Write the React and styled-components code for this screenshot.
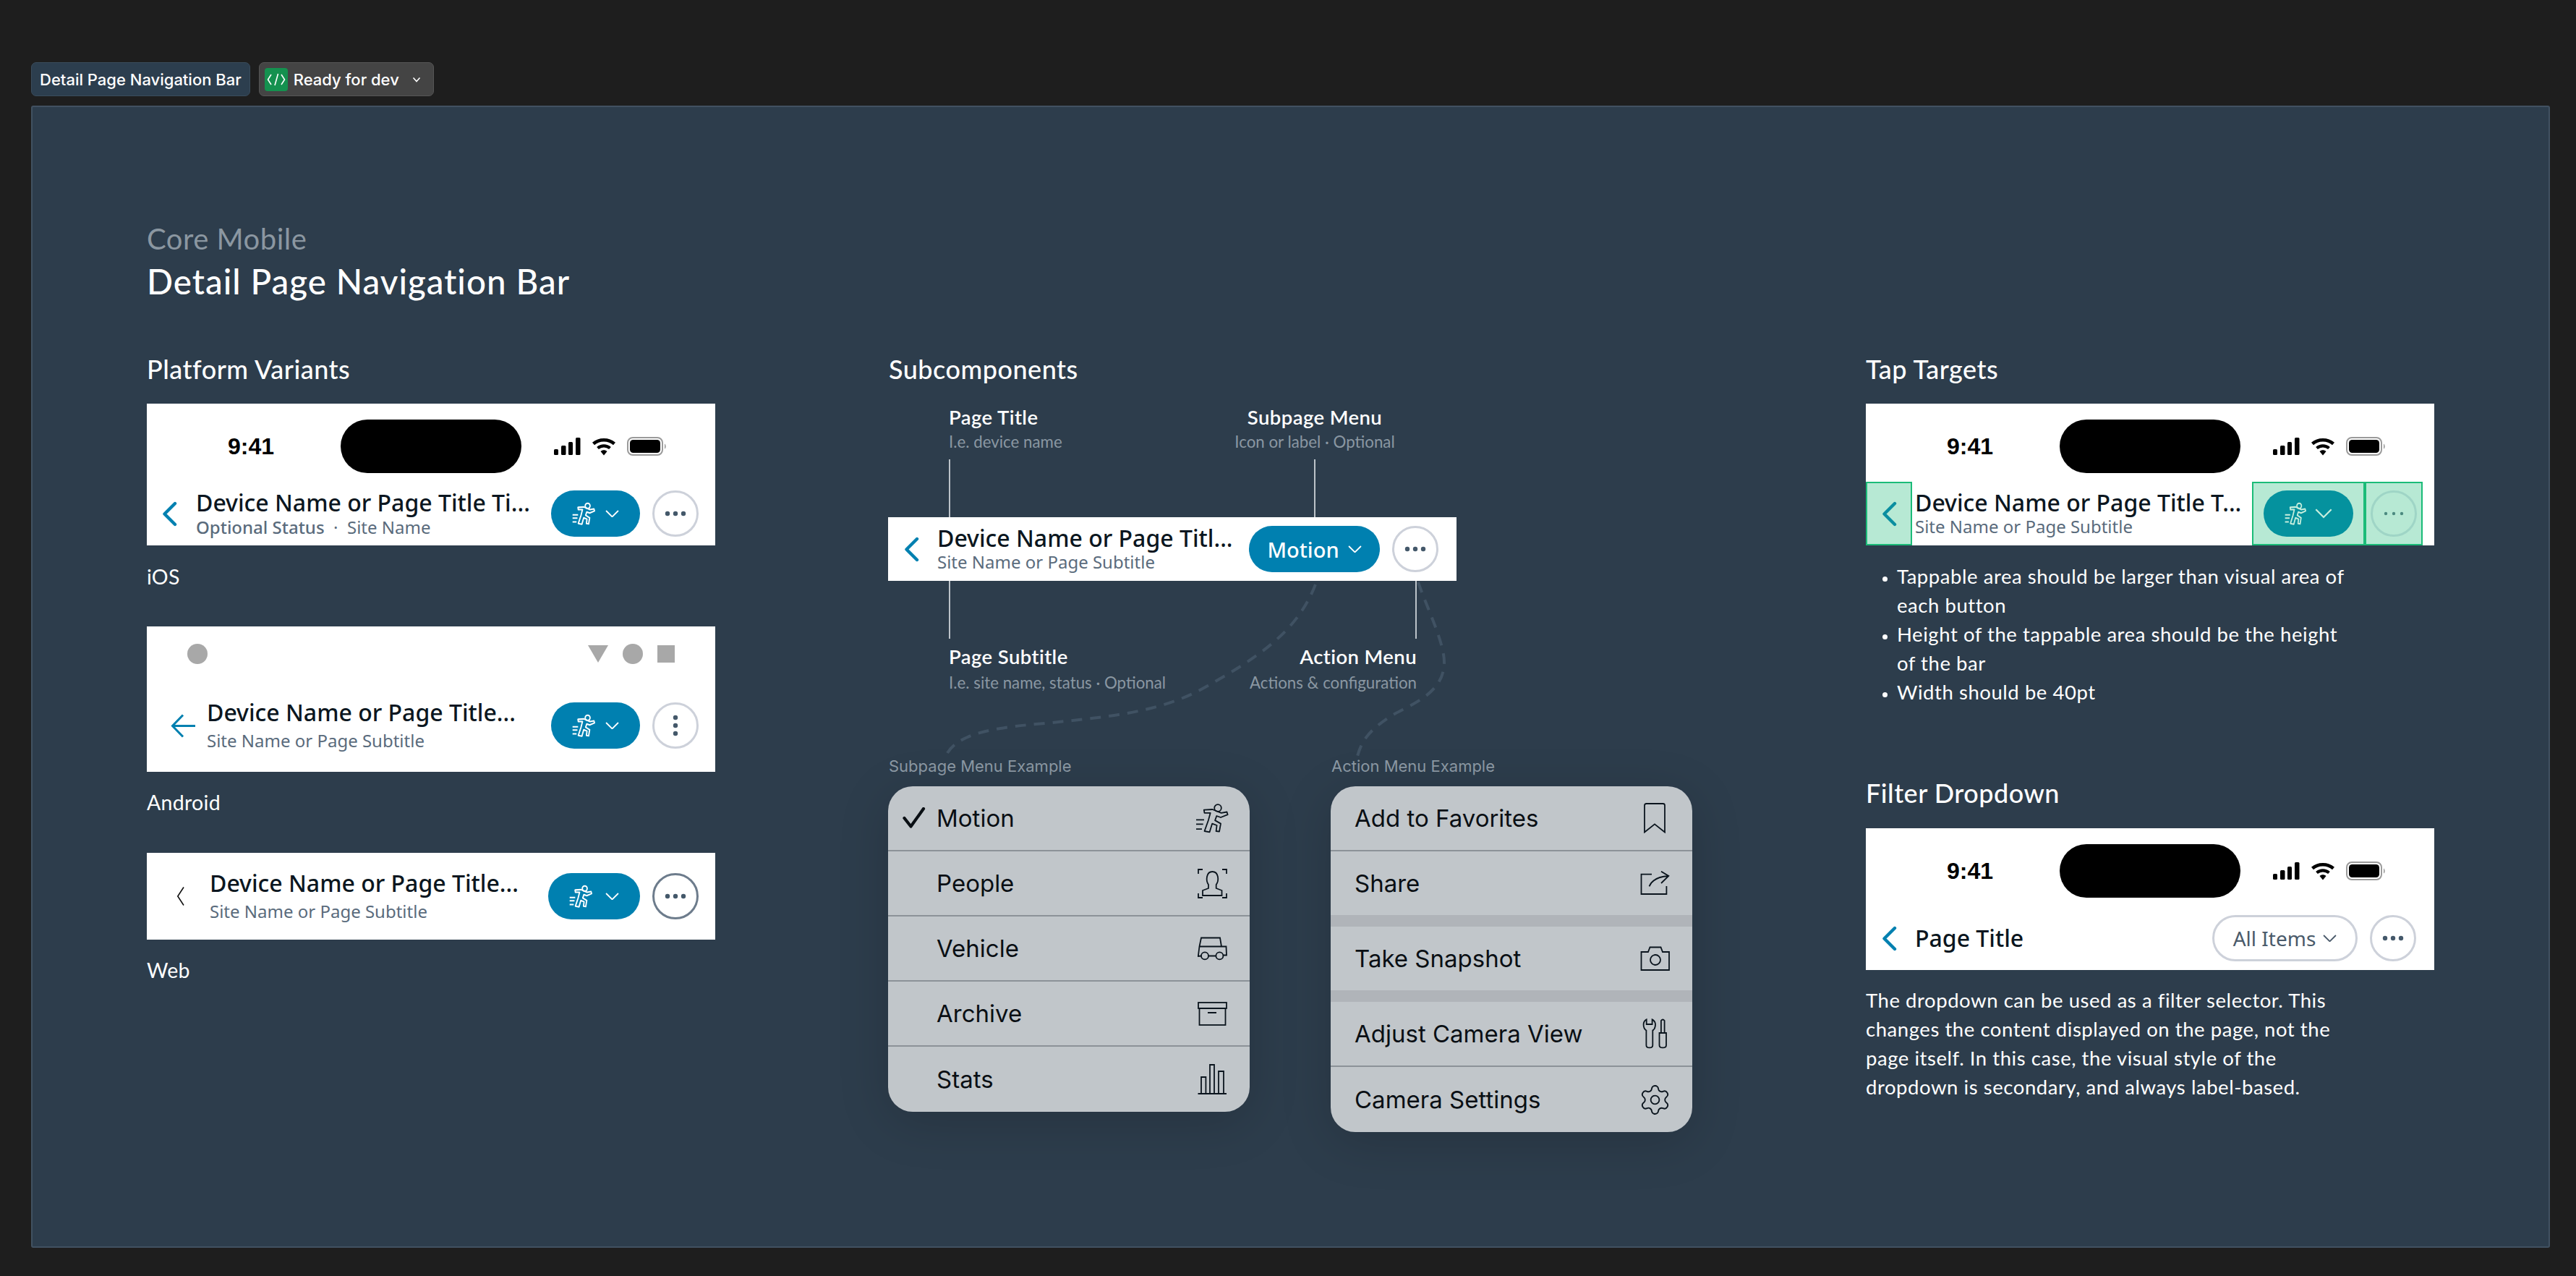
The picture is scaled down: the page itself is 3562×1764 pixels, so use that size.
import React from "react";
import styled, { createGlobalStyle } from "styled-components";
import { Settings } from "lucide-react";

const Global = createGlobalStyle`
  html, body { margin: 0; padding: 0; background: #1e1e1e; }
  * { box-sizing: border-box; }
`;
const HEAD = `Lato, "Open Sans", sans-serif`;
const BAR = `"Noto Sans", "Open Sans", sans-serif`;
const UI = `Inter, "Noto Sans", sans-serif`;

const Page = styled.div`
  width: 3562px; height: 1764px; background: #1e1e1e; padding: 86px 36px 0 43px; overflow: hidden;
`;
const Tabs = styled.div`display: flex; gap: 12px; height: 47px; margin-bottom: 13px;`;
const Tab = styled.div`
  display: flex; align-items: center; height: 47px; border-radius: 7px; font: 500 22px ${UI}; color: #fff;
  background: ${p => p.$bg}; border: 1.5px solid ${p => p.$line}; padding: ${p => p.$pad};
`;
const CodeBadge = styled.span`
  display: flex; width: 32px; height: 32px; border-radius: 4px; background: #14914f; margin-right: 8px;
`;
const TabCaret = styled.svg`width: 12px; height: 8px; margin-left: 18px;`;

const Frame = styled.div`
  width: 3483px; height: 1579px; background: #2d3d4c; border: 2px solid #415161; border-radius: 3px;
  padding: 160px 0 0 158px;
`;
const Eyebrow = styled.div`font: 400 40px/44px ${HEAD}; letter-spacing: .5px; color: #8b97a1;`;
const PageTitle = styled.h1`margin: 9px 0 0; font: 500 47.5px/56px ${HEAD}; letter-spacing: 1px; color: #fff;`;
const Columns = styled.div`display: grid; grid-template-columns: 1025px 1352px 786px; margin-top: 73px;`;
const Column = styled.div`position: relative; display: flex; flex-direction: column; align-items: flex-start;`;
const SectionTitle = styled.h2`
  margin: ${p => p.$top || 0}px 0 ${p => p.$bottom || 28}px; padding-left: ${p => p.$inset || 0}px;
  font: 500 36px/40px ${HEAD}; letter-spacing: .5px; color: #fff;
`;
const Caption = styled.div`font: 400 28.5px/32px ${HEAD}; letter-spacing: .3px; color: #fff; margin: ${p => p.$top}px 0 ${p => p.$bottom}px;`;

const Bar = styled.div`width: 786px; background: #fff; flex: none;`;

const StatusRow = styled.div`display: flex; align-items: center; height: 108px; padding: 22px 0 12px 112px;`;
const Time = styled.div`width: 64px; margin-right: 92px; font: 700 32px/1 "Liberation Sans", Arial, sans-serif; color: #000;`;
const Island = styled.div`width: 250px; height: 74px; border-radius: 37px; background: #000; margin-right: 45px;`;
const SysIcons = styled.div`display: flex; align-items: center; gap: 15px;`;

const AndroidRow = styled.div`display: flex; align-items: flex-start; height: 93px; padding: 24px 0 0 56px;`;
const DroidDot = styled.div`width: 28px; height: 28px; border-radius: 50%; background: #a8a8a8; margin-left: ${p => p.$left || 0}px;`;
const DroidTriangle = styled.svg`width: 28px; height: 24px; margin: 2px 0 0 526px;`;
const DroidSquare = styled.div`width: 24px; height: 24px; background: #a8a8a8; margin: 2px 0 0 20px;`;

const NavRow = styled.div`
  display: flex; align-items: center; height: ${p => p.$h || 88}px; padding-right: ${p => p.$right ?? 23}px;
  margin-bottom: ${p => p.$after || 0}px;
`;
const BackSlot = styled.div`display: flex; flex: none; align-items: center; width: ${p => p.$w}px; padding-left: ${p => p.$left}px;`;
const TitleBlock = styled.div`
  flex: 1; min-width: 0; display: flex; flex-direction: column; gap: ${p => p.$gap || 0}px; padding-left: ${p => p.$inset || 0}px;
`;
const DeviceTitle = styled.div`font: 500 32px/36px ${BAR}; color: #0b1620; white-space: nowrap;`;
const DeviceSub = styled.div`font: 400 24px/30px ${BAR}; color: #5a6b7c; white-space: nowrap;`;
const StatusText = styled.span`font-weight: 500;`;
const Actions = styled.div`display: flex; flex: none; gap: 17px; align-items: center;`;
const Pill = styled.div`
  display: flex; align-items: center; justify-content: center; flex: none; gap: ${p => p.$gap || 14}px;
  width: ${p => p.$w || 123}px; height: 64px; border-radius: 32px; background: ${p => p.$bg || "#0080b0"};
  color: ${p => p.$ink || "#fff"}; font: 500 29px/1 ${BAR};
`;
const OutlinePill = styled.div`
  display: flex; align-items: center; justify-content: center; gap: 10px; flex: none; width: 201px; height: 64px;
  border-radius: 32px; border: 3px solid #cdd1da; color: #4a5a6a; font: 400 28px/1 ${BAR};
`;
const More = styled.div`
  display: flex; align-items: center; justify-content: center; flex: none; width: 64px; height: 64px; border-radius: 50%;
  border: 3px solid ${p => p.$line || "#cdd1da"};
`;
const Zone = styled.div`
  display: flex; align-items: center; justify-content: center; flex: none; align-self: stretch; width: ${p => p.$w}px;
  background: #b7e9d4; border: 2px solid #1bbb78;
`;

const Overlay = styled.svg`position: absolute; left: 0; top: 0; width: 1000px; height: 600px; pointer-events: none;`;
const AnnoRow = styled.div`
  width: 786px; display: flex; justify-content: space-between; padding: ${p => p.$pad};
`;
const Anno = styled.div`
  display: flex; flex-direction: column; align-items: ${p => p.$align}; width: ${p => p.$w ? p.$w + "px" : "auto"};
`;
const AnnoName = styled.div`font: 600 27.5px/34px ${HEAD}; letter-spacing: .4px; color: #fff; white-space: nowrap;`;
const AnnoNote = styled.div`font: 400 22.3px/26px ${HEAD}; color: #8a97a2; margin-top: ${p => p.$top}px; white-space: nowrap;`;
const Stem = styled.div`width: 2px; height: ${p => p.$h}px; background: #bcc3c9; margin: ${p => p.$m};`;

const Menus = styled.div`display: flex; gap: 112px; margin-top: 89px;`;
const MenuCol = styled.div`display: flex; flex-direction: column; width: 500px;`;
const MenuLabel = styled.div`font: 400 22px/26px ${UI}; color: #8c99a4; margin: 0 0 15px 1px;`;
const Menu = styled.div`
  width: 500px; border-radius: 34px; background: #c1c6ca; overflow: hidden; box-shadow: 0 14px 70px rgba(0,0,0,.16);
`;
const MenuRow = styled.div`
  display: flex; align-items: center; height: ${p => p.$h || 90}px; padding-left: ${p => p.$left}px;
  font: 400 33px/1 ${UI}; color: #0a0f14; border-bottom: ${p => p.$line ? "2px solid #8c9298" : "none"};
`;
const MenuGap = styled.div`height: 16px; background: #b0b4b9;`;
const CheckSlot = styled.div`display: flex; width: 47px; flex: none;`;
const MenuText = styled.span`flex: 1;`;
const IconSlot = styled.div`display: flex; justify-content: center; width: 50px; margin-right: 27px; flex: none;`;

const Bullets = styled.ul`
  margin: 23px 0 0; padding: 0 0 0 43px; font: 400 27.5px/40px ${HEAD}; letter-spacing: .55px; color: #fff;
  li::marker { font-size: 20px; }
`;
const Body = styled.p`margin: 22px 0 0; font: 400 27.5px/40px ${HEAD}; letter-spacing: .55px; color: #fff;`;

const Signal = () => (
  <svg width="37" height="24" viewBox="0 0 37 24"><g fill="#000">
    <rect x="0" y="16" width="6" height="8" rx="1.5"/><rect x="10" y="11" width="6.5" height="13" rx="1.5"/>
    <rect x="20" y="6" width="6" height="18" rx="1.5"/><rect x="30" y="0" width="6.5" height="24" rx="1.5"/></g></svg>
);
const Wifi = () => (
  <svg width="34" height="25" viewBox="0 0 34 25" fill="none" stroke="#000">
    <path d="M2.5 8.5C10.5 1.5 23.5 1.5 31.5 8.5" strokeWidth="4.6"/>
    <path d="M8.5 14.5C13.5 10.3 20.5 10.3 25.5 14.5" strokeWidth="4.2"/>
    <path d="M12.5 19L17 24.5L21.5 19C19 16.8 15 16.8 12.5 19Z" fill="#000" stroke="none"/>
  </svg>
);
const Battery = () => (
  <svg width="55" height="26" viewBox="0 0 55 26">
    <rect x="1" y="1" width="48" height="24" rx="7" fill="none" stroke="#9a9a9a" strokeWidth="2"/>
    <rect x="4" y="4" width="42" height="18" rx="4.5" fill="#000"/>
    <path d="M52 9.5C54 10.5 54.5 15.5 52 16.5Z" fill="#9a9a9a"/>
  </svg>
);
const IosStatus = () => (
  <StatusRow>
    <Time>9:41</Time>
    <Island />
    <SysIcons><Signal /><Wifi /><Battery /></SysIcons>
  </StatusRow>
);
const Chevron = ({ color = "#0080b0" }) => (
  <svg width="21" height="35" viewBox="0 0 21 35" fill="none" stroke={color} strokeWidth="4.4" strokeLinecap="round" strokeLinejoin="round">
    <path d="M18 3L3.5 17.5L18 32"/>
  </svg>
);
const Arrow = () => (
  <svg width="34" height="33" viewBox="0 0 34 33" fill="none" stroke="#0080b0" strokeWidth="3">
    <path d="M17 1.5L2.5 16.5L17 31.5M2.5 16.5H34"/>
  </svg>
);
const ThinChevron = () => (
  <svg width="11" height="28" viewBox="0 0 11 27" fill="none" stroke="#111" strokeWidth="1.6">
    <path d="M10 1L1.8 13.5L10 26"/>
  </svg>
);
const Runner = ({ w = 32, h = 32, color = "#fff", sw = 2.7 }) => (
  <svg width={w} height={h} viewBox="0 0 46 42" preserveAspectRatio="none" fill="none" stroke={color} strokeWidth={sw} strokeLinejoin="round" strokeLinecap="round">
    <circle cx="31" cy="7" r="4.8"/>
    <path d="M11.8 9.7L23.6 9L35.7 13.8L43.5 12.5L44.6 16.2L35 20L29.3 18L27.1 24.1L35 28.6L33 39.7L28.6 39L29.6 31L23.2 28.6L19.6 40.3L12.5 39L17.9 24L20.7 13.8H12.5Z"/>
    <path d="M1 23.4H12M1 29.3H10.7M1 36.2H9" strokeLinecap="butt"/>
  </svg>
);
const Caret = ({ w = 19, color = "#fff", sw = 1.8 }) => (
  <svg width={w} height={w * 0.55} viewBox="0 0 19 10.5" fill="none" stroke={color} strokeWidth={sw}>
    <path d="M1 1L9.5 9.5L18 1"/>
  </svg>
);
const Dots = ({ color = "#44586a", r = 3.2 }) => (
  <svg width="30" height="8" viewBox="0 0 30 8" fill={color}>
    <circle cx="4" cy="4" r={r}/><circle cx="15" cy="4" r={r}/><circle cx="26" cy="4" r={r}/>
  </svg>
);
const VDots = () => (
  <svg width="8" height="30" viewBox="0 0 8 30" fill="#44586a">
    <circle cx="4" cy="4" r="3.2"/><circle cx="4" cy="15" r="3.2"/><circle cx="4" cy="26" r="3.2"/>
  </svg>
);

const lineProps = { fill: "none", stroke: "#0a141d", strokeWidth: 1.8 };
const IconFace = () => (
  <svg width="41" height="41" viewBox="0 0 41 41" {...lineProps}>
    <path d="M1 7V1H7M34 1H40V7M1 34V40H7M34 40H40V34"/>
    <path d="M7 37V30L15 27V22C11 16 12 4 20.4 4C29 4 30 16 25.7 22V27L33.5 30V37Z"/>
  </svg>
);
const IconCar = () => (
  <svg width="41" height="33" viewBox="0 0 41 33" {...lineProps}>
    <path d="M2.5 13.5L5 1.5H31L33 13.5H39.5L40 25.5H35.4M25.4 26.5H15M5 26.5L.8 27L2.5 13.5H33"/>
    <circle cx="10" cy="26.4" r="5"/><circle cx="30.4" cy="26.4" r="5"/>
  </svg>
);
const IconArchive = () => (
  <svg width="41" height="33" viewBox="0 0 41 33" {...lineProps}>
    <rect x="1" y="1" width="39" height="8"/><rect x="2.5" y="9" width="36" height="23"/><path d="M14 15H26"/>
  </svg>
);
const IconStats = () => (
  <svg width="41" height="42" viewBox="0 0 41 42" {...lineProps}>
    <path d="M5 41V18H11.4V41M17 41V1H23V41M29 41V10H36V41M.5 41H40"/>
  </svg>
);
const IconBookmark = () => (
  <svg width="30" height="42" viewBox="0 0 30 42" {...lineProps}>
    <path d="M1 40.5V3.5Q1 1 3.5 1H26.5Q29 1 29 3.5V40.5L15 29.3Z"/>
  </svg>
);
const IconShare = () => (
  <svg width="41" height="34" viewBox="0 0 41 34" {...lineProps}>
    <path d="M16 4.6H1.5V32H36.4V21"/><path d="M12.5 21.4C16 13 24 8 39 7M29 .7L39.3 7L29 17"/>
  </svg>
);
const IconCamera = () => (
  <svg width="41" height="34" viewBox="0 0 41 34" {...lineProps}>
    <path d="M1.5 8H11L13.5 1.5H28.5L31 8H40V33H1.5Z"/><circle cx="21" cy="19" r="7"/>
  </svg>
);
const IconTools = () => (
  <svg width="34" height="42" viewBox="0 0 34 42" {...lineProps}>
    <path d="M5.7 1.4V8H13.6V1.4C16.5 2.8 18 5.5 18 8.5C18 12 16.5 15 14.3 16.5V37C14.3 41.6 5.4 41.6 5.4 37V16.5C3 15 1.6 12 1.6 8.5C1.6 5.5 3 2.8 5.7 1.4Z"/>
    <path d="M23.5 20H33V37C33 41.6 23.5 41.6 23.5 37ZM25.9 20V3Q28.2 0 30.6 3V20"/>
  </svg>
);
const IconCheck = () => (
  <svg width="32" height="30" viewBox="0 0 32 30" fill="none" stroke="#0a0f14" strokeWidth="4.2" strokeLinecap="round" strokeLinejoin="round">
    <path d="M2.5 15L11.5 26.5L29 2"/>
  </svg>
);

const App = () => (
  <Page>
    <Global />
    <Tabs>
      <Tab $bg="#2c3e4e" $line="#3a4c5c" $pad="0 11px">Detail Page Navigation Bar</Tab>
      <Tab $bg="#444444" $line="#555555" $pad="0 17px 0 7px">
        <CodeBadge>
          <svg width="32" height="32" viewBox="0 0 32 32" fill="none" stroke="#fff" strokeWidth="1.6">
            <path d="M9 9L4.5 16L9 23M18.5 8L14 24M23 9L27.5 16L23 23"/>
          </svg>
        </CodeBadge>
        Ready for dev
        <TabCaret viewBox="0 0 12 8" fill="none" stroke="#fff" strokeWidth="1.6"><path d="M1.5 1.5L6 6.5L10.5 1.5"/></TabCaret>
      </Tab>
    </Tabs>
    <Frame>
      <Eyebrow>Core Mobile</Eyebrow>
      <PageTitle>Detail Page Navigation Bar</PageTitle>
      <Columns>
        <Column>
          <SectionTitle>Platform Variants</SectionTitle>
          <Bar>
            <IosStatus />
            <NavRow>
              <BackSlot $w={68} $left={21}><Chevron /></BackSlot>
              <TitleBlock $gap={1}>
                <DeviceTitle>Device Name or Page Title Ti...</DeviceTitle>
                <DeviceSub><StatusText>Optional Status</StatusText> &nbsp;·&nbsp; Site Name</DeviceSub>
              </TitleBlock>
              <Actions>
                <Pill><Runner /><Caret /></Pill>
                <More><Dots /></More>
              </Actions>
            </NavRow>
          </Bar>
          <Caption $top={27} $bottom={53}>iOS</Caption>
          <Bar>
            <AndroidRow>
              <DroidDot />
              <DroidTriangle viewBox="0 0 28 24"><path d="M0 0H28L14 24Z" fill="#a8a8a8"/></DroidTriangle>
              <DroidDot $left={20} />
              <DroidSquare />
            </AndroidRow>
            <NavRow $after={20}>
              <BackSlot $w={83} $left={33}><Arrow /></BackSlot>
              <TitleBlock $gap={6}>
                <DeviceTitle>Device Name or Page Title...</DeviceTitle>
                <DeviceSub>Site Name or Page Subtitle</DeviceSub>
              </TitleBlock>
              <Actions>
                <Pill><Runner /><Caret /></Pill>
                <More><VDots /></More>
              </Actions>
            </NavRow>
          </Bar>
          <Caption $top={26} $bottom={54}>Android</Caption>
          <Bar>
            <NavRow $h={120}>
              <BackSlot $w={87} $left={41}><ThinChevron /></BackSlot>
              <TitleBlock $gap={6}>
                <DeviceTitle>Device Name or Page Title...</DeviceTitle>
                <DeviceSub>Site Name or Page Subtitle</DeviceSub>
              </TitleBlock>
              <Actions>
                <Pill $w={127} $gap={18}><Runner /><Caret /></Pill>
                <More $line="#6d7c8c"><Dots /></More>
              </Actions>
            </NavRow>
          </Bar>
          <Caption $top={26} $bottom={0}>Web</Caption>
        </Column>

        <Column>
          <Overlay viewBox="0 0 1000 600" fill="none" stroke="#405263" strokeWidth="4" strokeDasharray="15 11">
            <path d="M591 318C565 385 510 420 433 463C370 497 290 502 227 509C160 515 90 520 78 560"/>
            <path d="M733 315C745 350 770 400 769 427C768 470 720 485 695 500C665 520 652 535 647 565"/>
          </Overlay>
          <SectionTitle $bottom={30} $inset={1}>Subcomponents</SectionTitle>
          <AnnoRow $pad="0 76px 0 84px">
            <Anno $align="flex-start">
              <AnnoName>Page Title</AnnoName>
              <AnnoNote $top={4}>I.e. device name</AnnoNote>
              <Stem $h={80} $m="11px 0 0 0" />
            </Anno>
            <Anno $align="center" $w={240}>
              <AnnoName>Subpage Menu</AnnoName>
              <AnnoNote $top={4}>Icon or label · Optional</AnnoNote>
              <Stem $h={80} $m="11px 0 0 0" />
            </Anno>
          </AnnoRow>
          <Bar>
            <NavRow $right={25}>
              <BackSlot $w={68} $left={22}><Chevron /></BackSlot>
              <TitleBlock>
                <DeviceTitle>Device Name or Page Titl...</DeviceTitle>
                <DeviceSub>Site Name or Page Subtitle</DeviceSub>
              </TitleBlock>
              <Actions>
                <Pill $w={181} $gap={12}>Motion<Caret /></Pill>
                <More><Dots /></More>
              </Actions>
            </NavRow>
          </Bar>
          <AnnoRow $pad="0 55px 0 84px">
            <Anno $align="flex-start">
              <Stem $h={80} $m="0 0 8px 0" />
              <AnnoName>Page Subtitle</AnnoName>
              <AnnoNote $top={6}>I.e. site name, status · Optional</AnnoNote>
            </Anno>
            <Anno $align="flex-end">
              <Stem $h={80} $m="0 0 8px 0" />
              <AnnoName>Action Menu</AnnoName>
              <AnnoNote $top={6}>Actions &amp; configuration</AnnoNote>
            </Anno>
          </AnnoRow>
          <Menus>
            <MenuCol>
              <MenuLabel>Subpage Menu Example</MenuLabel>
              <Menu>
                <MenuRow $left={20} $line><CheckSlot><IconCheck /></CheckSlot><MenuText>Motion</MenuText><IconSlot><Runner w={46} h={42} color="#0a141d" sw={1.8} /></IconSlot></MenuRow>
                <MenuRow $left={20} $line><CheckSlot /><MenuText>People</MenuText><IconSlot><IconFace /></IconSlot></MenuRow>
                <MenuRow $left={20} $line><CheckSlot /><MenuText>Vehicle</MenuText><IconSlot><IconCar /></IconSlot></MenuRow>
                <MenuRow $left={20} $line><CheckSlot /><MenuText>Archive</MenuText><IconSlot><IconArchive /></IconSlot></MenuRow>
                <MenuRow $left={20}><CheckSlot /><MenuText>Stats</MenuText><IconSlot><IconStats /></IconSlot></MenuRow>
              </Menu>
            </MenuCol>
            <MenuCol>
              <MenuLabel>Action Menu Example</MenuLabel>
              <Menu>
                <MenuRow $left={33} $line><MenuText>Add to Favorites</MenuText><IconSlot><IconBookmark /></IconSlot></MenuRow>
                <MenuRow $left={33} $h={88}><MenuText>Share</MenuText><IconSlot><IconShare /></IconSlot></MenuRow>
                <MenuGap />
                <MenuRow $left={33} $h={88}><MenuText>Take Snapshot</MenuText><IconSlot><IconCamera /></IconSlot></MenuRow>
                <MenuGap />
                <MenuRow $left={33} $line><MenuText>Adjust Camera View</MenuText><IconSlot><IconTools /></IconSlot></MenuRow>
                <MenuRow $left={33}><MenuText>Camera Settings</MenuText><IconSlot><Settings size={47} strokeWidth={0.95} color="#0a141d" /></IconSlot></MenuRow>
              </Menu>
            </MenuCol>
          </Menus>
        </Column>

        <Column>
          <SectionTitle>Tap Targets</SectionTitle>
          <Bar>
            <IosStatus />
            <NavRow $right={16}>
              <Zone $w={64}><Chevron color="#0a8ea0" /></Zone>
              <TitleBlock $inset={4}>
                <DeviceTitle>Device Name or Page Title T...</DeviceTitle>
                <DeviceSub>Site Name or Page Subtitle</DeviceSub>
              </TitleBlock>
              <Zone $w={156}><Pill $w={124} $bg="#05929e" $gap={12}><Runner w={30} h={32} color="#c6eedd" /><Caret w={24} color="#c6eedd" /></Pill></Zone>
              <Zone $w={80}><More $line="#9fd5c6"><Dots color="#4b8a80" r={2.2} /></More></Zone>
            </NavRow>
          </Bar>
          <Bullets>
            <li>Tappable area should be larger than visual area of<br />each button</li>
            <li>Height of the tappable area should be the height<br />of the bar</li>
            <li>Width should be 40pt</li>
          </Bullets>
          <SectionTitle $top={99} $bottom={29}>Filter Dropdown</SectionTitle>
          <Bar>
            <IosStatus />
            <NavRow $right={25}>
              <BackSlot $w={68} $left={22}><Chevron /></BackSlot>
              <TitleBlock><DeviceTitle>Page Title</DeviceTitle></TitleBlock>
              <Actions>
                <OutlinePill>All Items<Caret color="#4a5a6a" /></OutlinePill>
                <More><Dots /></More>
              </Actions>
            </NavRow>
          </Bar>
          <Body>
            The dropdown can be used as a filter selector. This<br />
            changes the content displayed on the page, not the<br />
            page itself. In this case, the visual style of the<br />
            dropdown is secondary, and always label-based.
          </Body>
        </Column>
      </Columns>
    </Frame>
  </Page>
);
export default App;
